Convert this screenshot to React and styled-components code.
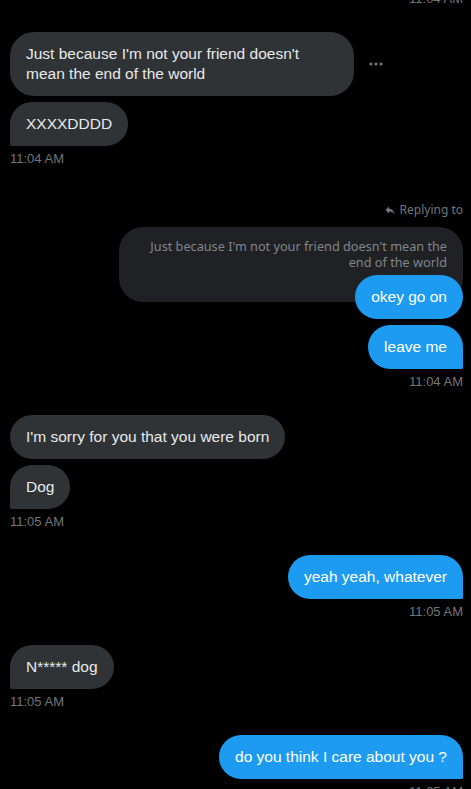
import React from "react"
import styled, { createGlobalStyle } from "styled-components"

const GlobalStyle = createGlobalStyle`
  body {
    margin: 0;
    background: #000;
    font-family: "Liberation Sans", Arial, sans-serif;
  }
`

const Page = styled.div`
  background: #000;
  height: 789px;
  overflow: hidden;
  padding: 0 8px 0 10px;
`

const Thread = styled.div`
  display: flex;
  flex-direction: column;
  gap: 25px;
  margin-top: -8px;
`

const Group = styled.div`
  display: flex;
  flex-direction: column;
  align-items: ${({ $out }) => ($out ? "flex-end" : "flex-start")};
  gap: 6px;
`

const Row = styled.div`
  display: flex;
  align-items: center;
  gap: 15px;
`

const Bubble = styled.div`
  position: relative;
  box-sizing: border-box;
  max-width: 344px;
  padding: 12px 16px;
  font-size: 15.5px;
  line-height: 20px;
  color: ${({ $out }) => ($out ? "#fff" : "#e7e9ea")};
  background: ${({ $out }) => ($out ? "#1d9bf0" : "#2f3336")};
  border-radius: 24px;
  ${({ $tail, $out }) =>
    $tail && ($out ? "border-bottom-right-radius: 2px;" : "border-bottom-left-radius: 2px;")}
`

const Time = styled.div`
  margin-top: -1px;
  font-size: 13px;
  line-height: 16px;
  color: #71767b;
`

const Replying = styled.div`
  display: flex;
  align-items: center;
  gap: 4px;
  margin-top: 10px;
  margin-bottom: 4px;
  font-family: "Noto Sans", sans-serif;
  font-size: 12px;
  line-height: 15px;
  color: #71767b;
`

const Quote = styled.div`
  box-sizing: border-box;
  width: 344px;
  padding: 11px 16px 32px;
  margin-bottom: -33px;
  border-radius: 24px;
  background: #1f2125;
  font-family: "Noto Sans", sans-serif;
  font-size: 12.7px;
  line-height: 16px;
  text-align: right;
  color: #80858a;
`

const More = () => (
  <svg width="14" height="4" viewBox="0 0 14 4" fill="#71767b">
    <circle cx="2" cy="2" r="1.6" />
    <circle cx="7" cy="2" r="1.6" />
    <circle cx="12" cy="2" r="1.6" />
  </svg>
)

const ReplyIcon = () => (
  <svg width="12" height="12" viewBox="0 0 24 24" fill="#71767b">
    <path d="M10 9V5l-7 7 7 7v-4.1c5 0 8.5 1.6 11 5.1-1-5-4-10-11-11z" />
  </svg>
)

const App = () => {
  return (
    <Page>
      <GlobalStyle />
      <Thread>
        <Group $out>
          <Time>11:04 AM</Time>
        </Group>

        <Group>
          <Row>
            <Bubble>Just because I'm not your friend doesn't mean the end of the world</Bubble>
            <More />
          </Row>
          <Bubble $tail>XXXXDDDD</Bubble>
          <Time>11:04 AM</Time>
        </Group>

        <Group $out>
          <Replying>
            <ReplyIcon />
            Replying to
          </Replying>
          <Quote>Just because I'm not your friend doesn't mean the end of the world</Quote>
          <Bubble $out>okey go on</Bubble>
          <Bubble $out $tail>leave me</Bubble>
          <Time>11:04 AM</Time>
        </Group>

        <Group>
          <Bubble>I'm sorry for you that you were born</Bubble>
          <Bubble $tail>Dog</Bubble>
          <Time>11:05 AM</Time>
        </Group>

        <Group $out>
          <Bubble $out $tail>yeah yeah, whatever</Bubble>
          <Time>11:05 AM</Time>
        </Group>

        <Group>
          <Bubble $tail>N***** dog</Bubble>
          <Time>11:05 AM</Time>
        </Group>

        <Group $out>
          <Bubble $out $tail>do you think I care about you ?</Bubble>
          <Time>11:05 AM</Time>
        </Group>
      </Thread>
    </Page>
  )
}

export default App
